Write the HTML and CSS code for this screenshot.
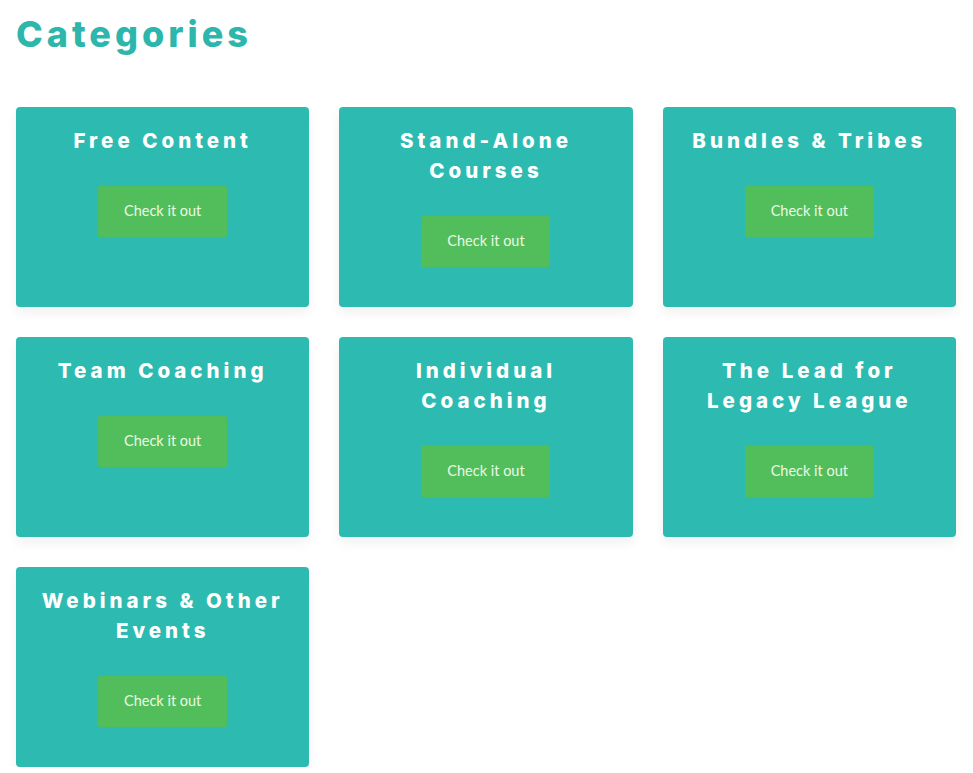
FILE: index.html
```html
<!DOCTYPE html>
<html>
<head>
<meta charset="utf-8">
<link rel="stylesheet" href="styles.css">
</head>
<body>
<main class="page">
  <h1 class="page-title">Categories</h1>
  <div class="grid">
    <div class="card"><h2 class="card-title">Free Content</h2><a class="btn">Check it out</a></div>
    <div class="card"><h2 class="card-title">Stand-Alone Courses</h2><a class="btn">Check it out</a></div>
    <div class="card"><h2 class="card-title">Bundles &amp; Tribes</h2><a class="btn">Check it out</a></div>
    <div class="card"><h2 class="card-title">Team Coaching</h2><a class="btn">Check it out</a></div>
    <div class="card"><h2 class="card-title">Individual Coaching</h2><a class="btn">Check it out</a></div>
    <div class="card"><h2 class="card-title">The Lead for Legacy League</h2><a class="btn">Check it out</a></div>
    <div class="card"><h2 class="card-title">Webinars &amp; Other Events</h2><a class="btn">Check it out</a></div>
  </div>
</main>
</body>
</html>
```

FILE: styles.css
```css
html, body {
  margin: 0;
  padding: 0;
  background: #ffffff;
}
.page {
  width: 940px;
  padding: 0 17px 0 16px;
}
.page-title {
  margin: 12px 0 0 0;
  font-family: "Inter", "Liberation Sans", sans-serif;
  font-weight: 800;
  font-size: 36px;
  line-height: 44px;
  letter-spacing: 4px;
  color: #2cb6ac;
}
.grid {
  margin-top: 51px;
  display: grid;
  grid-template-columns: repeat(3, 1fr);
  gap: 30px;
}
.card {
  height: 200px;
  box-sizing: border-box;
  background: #2dbbb1;
  border-radius: 4px;
  padding: 19px 20px 0;
  text-align: center;
  box-shadow: 0 6px 12px rgba(0, 0, 0, 0.06);
}
.card-title {
  margin: 0 0 30px 0;
  font-family: "Inter", "Liberation Sans", sans-serif;
  font-weight: 800;
  font-size: 20.5px;
  line-height: 30px;
  letter-spacing: 4px;
  color: #ffffff;
}
.btn {
  display: inline-flex;
  align-items: center;
  justify-content: center;
  width: 129px;
  height: 51px;
  padding-bottom: 2px;
  box-sizing: border-box;
  background: #52be5b;
  border-radius: 2px;
  font-family: "Lato", "Noto Sans", sans-serif;
  font-size: 14.5px;
  color: #eaf8e4;
  text-decoration: none;
}
```
